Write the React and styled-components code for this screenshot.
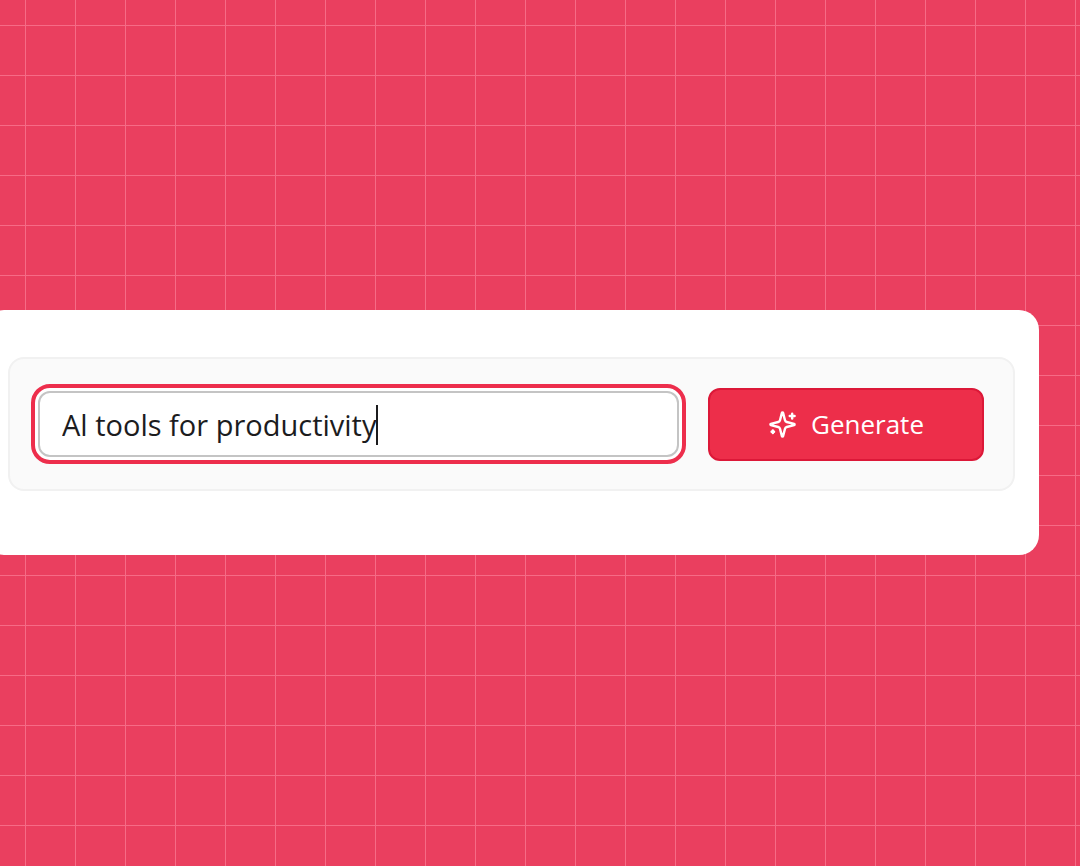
import React, { useState } from 'react'
import styled, { createGlobalStyle } from 'styled-components'

const App = () => {
    const [topic, setTopic] = useState('Al tools for productivity')

    return (
        <>
            <GlobalStyle />
            <Page>
                <Card>
                    <Panel onSubmit={(e) => e.preventDefault()}>
                        <FocusRing>
                            <Field>
                                <TopicInput
                                    aria-label="Topic"
                                    type="text"
                                    value={topic}
                                    onChange={(e) => setTopic(e.target.value)}
                                />
                                <Caret />
                            </Field>
                        </FocusRing>
                        <GenerateButton type="submit">
                            <SparklesIcon />
                            Generate
                        </GenerateButton>
                    </Panel>
                </Card>
            </Page>
        </>
    )
}

const SparklesIcon = () => (
    <svg
        width="29"
        height="29"
        viewBox="0 0 24 24"
        fill="none"
        stroke="currentColor"
        strokeWidth="2"
        strokeLinecap="round"
        strokeLinejoin="round"
        aria-hidden="true"
    >
        <path d="M9.937 15.5A2 2 0 0 0 8.5 14.063l-6.135-1.582a.5.5 0 0 1 0-.962L8.5 9.936A2 2 0 0 0 9.937 8.5l1.582-6.135a.5.5 0 0 1 .963 0L14.063 8.5A2 2 0 0 0 15.5 9.937l6.135 1.581a.5.5 0 0 1 0 .964L15.5 14.063a2 2 0 0 0-1.437 1.437l-1.582 6.135a.5.5 0 0 1-.963 0z" />
        <path d="M20 3v4" />
        <path d="M22 5h-4" />
        <path d="M4 17v2" />
        <path d="M5 18H3" />
    </svg>
)

const GlobalStyle = createGlobalStyle`
    * {
        box-sizing: border-box;
    }
    body {
        margin: 0;
        font-family: 'Open Sans', 'Noto Sans', sans-serif;
    }
`

const Page = styled.main`
    min-height: 100vh;
    padding: 310px 41px 0 0;
    overflow: hidden;
    background-color: #ea3f5f;
    background-image:
        linear-gradient(to right, #f66b86 1px, transparent 1px),
        linear-gradient(to bottom, #f66b86 1px, transparent 1px);
    background-size: 50px 50px;
    background-position: 25px 25px;
`

/* the card runs off the left edge of the page */
const Card = styled.section`
    margin-left: -16px;
    padding: 47px 24px 64px;
    border-radius: 20px;
    background: #ffffff;
`

const Panel = styled.form`
    display: flex;
    align-items: center;
    gap: 22px;
    padding: 25px 29px 25px 21px;
    border: 2px solid #f1f1f1;
    border-radius: 16px;
    background: #fafafa;
`

const FocusRing = styled.div`
    flex: 1;
    padding: 3px;
    border: 4px solid #ed2e4c;
    border-radius: 19px;
    background: #ffffff;
`

const Field = styled.div`
    display: flex;
    align-items: center;
    height: 66px;
    padding: 2px 22px 0;
    border: 2px solid #c4c4c4;
    border-radius: 12px;
`

const TopicInput = styled.input`
    field-sizing: content;
    max-width: 100%;
    padding: 0;
    border: 0;
    outline: 0;
    background: transparent;
    caret-color: transparent;
    color: #1c1c1e;
    font-family: inherit;
    font-size: 29px;
    line-height: 40px;
`

const Caret = styled.span`
    flex: none;
    width: 2px;
    height: 40px;
    background: #1c1c1e;
`

const GenerateButton = styled.button`
    display: flex;
    align-items: center;
    justify-content: center;
    gap: 14px;
    width: 276px;
    height: 73px;
    padding: 0;
    border: 2px solid #dc1838;
    border-radius: 12px;
    background: #ed2e4a;
    color: #ffffff;
    font-family: inherit;
    font-size: 26px;
    line-height: 36px;
    cursor: pointer;
`

export default App
